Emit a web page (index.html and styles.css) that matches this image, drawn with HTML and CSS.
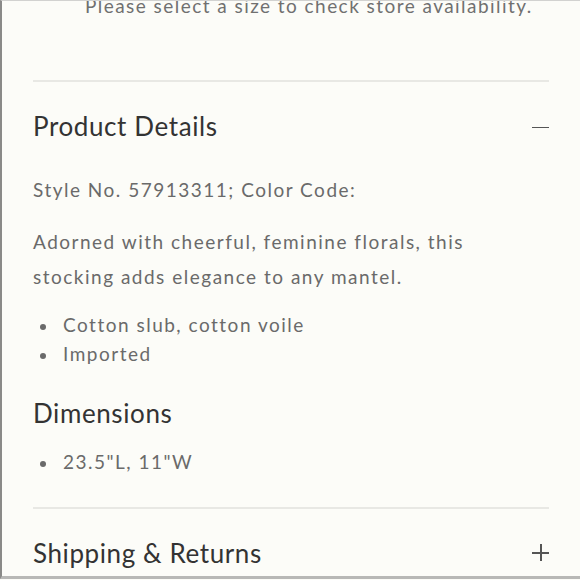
FILE: index.html
```html
<!DOCTYPE html>
<html>
<head>
<meta charset="utf-8">
<link rel="stylesheet" href="styles.css">
</head>
<body>
<div class="frame">
  <p class="avail">Please select a size to check store availability.</p>
  <section class="acc open">
    <div class="acc-head">
      <h2 class="acc-title">Product Details</h2>
      <span class="icon minus"></span>
    </div>
    <div class="acc-body">
      <p class="style-no">Style No. 57913311; Color Code:</p>
      <p class="desc">Adorned with cheerful, feminine florals, this<br>stocking adds elegance to any mantel.</p>
      <ul class="list">
        <li>Cotton slub, cotton voile</li>
        <li>Imported</li>
      </ul>
      <h3 class="sub">Dimensions</h3>
      <ul class="list dims">
        <li>23.5"L, 11"W</li>
      </ul>
    </div>
  </section>
  <section class="acc last">
    <div class="acc-head">
      <h2 class="acc-title">Shipping &amp; Returns</h2>
      <span class="icon plus"></span>
    </div>
  </section>
</div>
</body>
</html>
```
FILE: styles.css
```css
html, body {
  margin: 0;
  padding: 0;
  background: #fcfcf8;
}
body {
  font-family: "Lato", "Open Sans", sans-serif;
  color: #6a6a6a;
  overflow: hidden;
}
.frame {
  width: 580px;
  height: 579px;
  border-left: 2px solid #8a8a88;
  border-top: 1px solid #d2d2d0;
  border-bottom: 3px solid #b8b8b6;
  padding: 0 31px;
  box-sizing: border-box;
  overflow: hidden;
  background: #fcfcf8;
}
.avail {
  margin: -7px 0 62px 52px;
  height: 24px;
  font-size: 19px;
  line-height: 24px;
  letter-spacing: 1.45px;
  color: #707070;
  white-space: nowrap;
}
.acc {
  border-top: 2px solid #e8e8e4;
}
.acc-head {
  display: flex;
  align-items: center;
  justify-content: space-between;
  height: 88px;
}
.last .acc-head {
  height: 87px;
}
.acc-title {
  margin: 0;
  font-weight: 400;
  font-size: 26px;
  line-height: 30px;
  letter-spacing: 0.6px;
  color: #333;
}
.icon {
  width: 17px;
  height: 17px;
  position: relative;
}
.icon::before, .icon::after {
  content: "";
  position: absolute;
  background: #555;
}
.icon::before {
  left: 0; right: 0; top: 9px; height: 1.5px;
}
.plus::before {
  top: 8px;
}
.plus::after {
  top: 0; bottom: 0; left: 8px; width: 1.5px;
}
.acc-body {
  padding: 2px 0 31px;
}
.style-no, .desc {
  font-size: 19px;
  line-height: 35px;
  letter-spacing: 1.5px;
}
.style-no {
  margin: 0 0 17px;
}
.desc {
  margin: 0 0 16px;
}
.list {
  margin: 0;
  padding: 0;
  list-style: none;
  font-size: 19px;
  line-height: 29px;
  letter-spacing: 1.5px;
}
.list li {
  display: flex;
  padding-left: 7px;
}
.list li::before {
  content: "";
  flex: none;
  width: 6px;
  height: 6px;
  border-radius: 50%;
  background: #6a6a6a;
  margin: 14px 17px 0 0;
}
.sub {
  margin: 30px 0 19px;
  font-weight: 400;
  font-size: 26px;
  line-height: 30px;
  letter-spacing: 0.6px;
  color: #333;
}
```
